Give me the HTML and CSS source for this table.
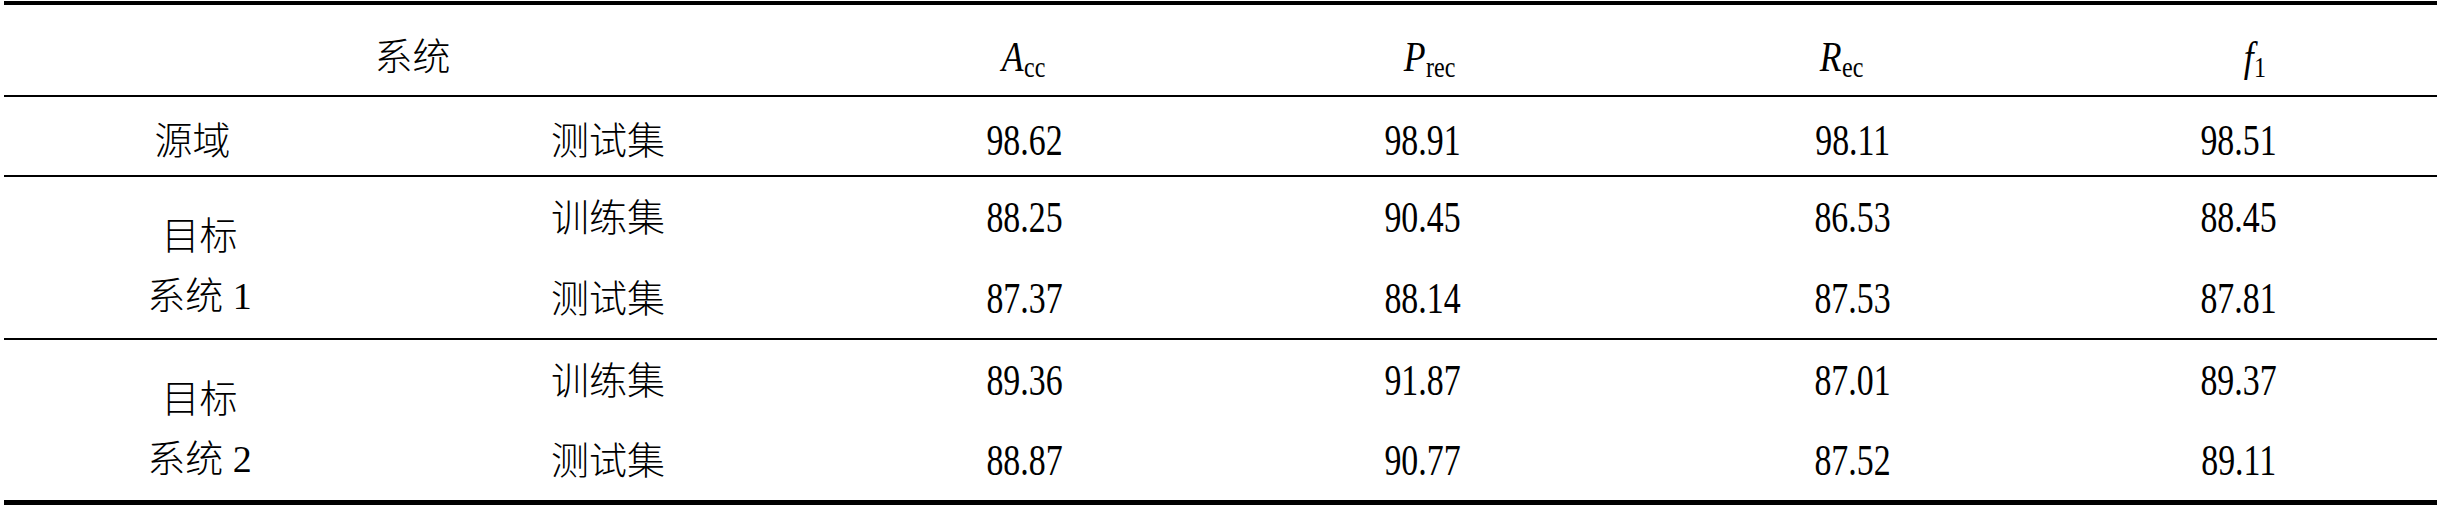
FILE: index.html
```html
<!DOCTYPE html>
<html lang="zh-CN">
<head>
<meta charset="utf-8">
<title>系统结果</title>
<link rel="stylesheet" href="styles.css">
</head>
<body>
<div class="tbl">
  <div class="row head">
    <div class="cell span2">系统</div>
    <div class="cell"><span class="sym"><i>A</i><span class="sb">cc</span></span></div>
    <div class="cell"><span class="sym"><i>P</i><span class="sb">rec</span></span></div>
    <div class="cell"><span class="sym"><i>R</i><span class="sb">ec</span></span></div>
    <div class="cell"><span class="sym"><i>f</i><span class="sb">1</span></span></div>
  </div>
  <div class="row single">
    <div class="cell">源域</div>
    <div class="cell">测试集</div>
    <div class="cell"><span class="num">98.62</span></div>
    <div class="cell"><span class="num">98.91</span></div>
    <div class="cell"><span class="num">98.11</span></div>
    <div class="cell"><span class="num">98.51</span></div>
  </div>
  <div class="row group first">
    <div class="cell sys">目标<br>系统 1</div>
    <div class="cell">训练集</div>
    <div class="cell"><span class="num">88.25</span></div>
    <div class="cell"><span class="num">90.45</span></div>
    <div class="cell"><span class="num">86.53</span></div>
    <div class="cell"><span class="num">88.45</span></div>
    <div class="cell">测试集</div>
    <div class="cell"><span class="num">87.37</span></div>
    <div class="cell"><span class="num">88.14</span></div>
    <div class="cell"><span class="num">87.53</span></div>
    <div class="cell"><span class="num">87.81</span></div>
  </div>
  <div class="row group last">
    <div class="cell sys">目标<br>系统 2</div>
    <div class="cell">训练集</div>
    <div class="cell"><span class="num">89.36</span></div>
    <div class="cell"><span class="num">91.87</span></div>
    <div class="cell"><span class="num">87.01</span></div>
    <div class="cell"><span class="num">89.37</span></div>
    <div class="cell">测试集</div>
    <div class="cell"><span class="num">88.87</span></div>
    <div class="cell"><span class="num">90.77</span></div>
    <div class="cell"><span class="num">87.52</span></div>
    <div class="cell"><span class="num">89.11</span></div>
  </div>
</div>
</body>
</html>
```
FILE: styles.css
```css
html, body {
  margin: 0;
  padding: 0;
  background: #fff;
}
body {
  padding: 1px 0 0 4px;
  font-family: "Liberation Serif", "Noto Sans CJK SC", serif;
  font-size: 38px;
  font-weight: 300;
  color: #000;
}
.tbl {
  width: 2433px;
  border-top: 4px solid #000;
  border-bottom: 5px solid #000;
}
.row {
  display: grid;
  grid-template-columns: 391px 426px 407px 407px 405px 397px;
}
.cell {
  display: flex;
  align-items: center;
  justify-content: center;
  line-height: 1;
}
.head {
  height: 90px;
  border-bottom: 2px solid #000;
}
.head .cell {
  padding-top: 14px;
}
.head .cell:nth-child(4) {
  padding-left: 10px;
}
.head .cell:nth-child(5) {
  padding-left: 34px;
}
.span2 {
  grid-column: span 2;
}
.single {
  height: 78px;
  border-bottom: 2px solid #000;
}
.single .cell {
  padding-top: 10px;
}
.single .cell:nth-child(1) {
  padding-right: 14px;
}
.single .cell:nth-child(4),
.group .cell:nth-child(4),
.group .cell:nth-child(9) {
  padding-right: 18px;
}
.single .cell:nth-child(5),
.group .cell:nth-child(5),
.group .cell:nth-child(10) {
  padding-left: 30px;
}
.group {
  grid-template-rows: 80px 81px;
}
.group.first {
  border-bottom: 2px solid #000;
}
.group.last {
  grid-template-rows: 80px 80px;
}
.sys {
  grid-row: span 2;
  align-items: flex-start;
  text-align: center;
  padding-top: 29px;
  line-height: 60px;
}
.group .cell:not(.sys) {
  padding-top: 2px;
}
.num {
  display: inline-block;
  font-size: 44px;
  transform: scaleX(0.77);
}
.sym {
  display: inline-flex;
  align-items: baseline;
}
.sym i {
  font-style: italic;
  font-size: 42px;
  display: inline-block;
  transform: scaleX(0.85);
  transform-origin: right;
}
.sb {
  font-size: 30px;
  position: relative;
  top: 6px;
  display: inline-block;
  transform: scaleX(0.8);
  transform-origin: left;
}
```
